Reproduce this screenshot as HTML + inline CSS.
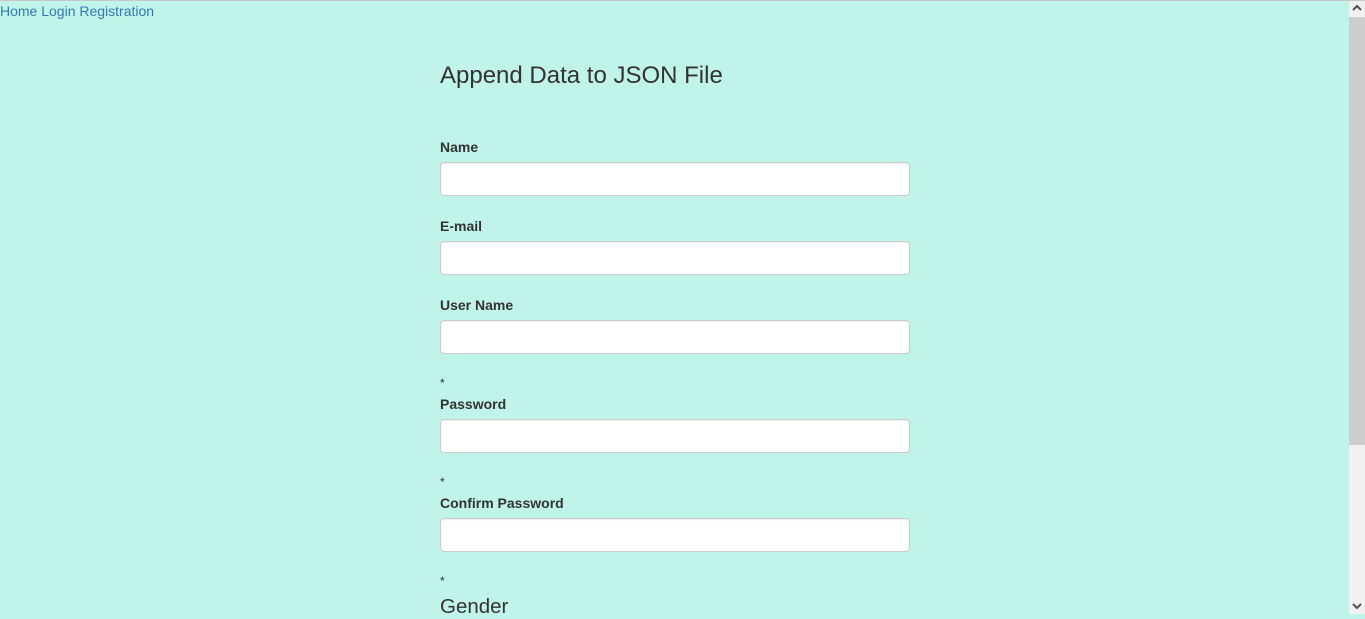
<!DOCTYPE html>
<html><head><meta charset="utf-8"><style>
html,body{margin:0;padding:0;}
body{width:1365px;height:614px;overflow:hidden;background:#c0f4e8;font-family:"Liberation Sans",Arial,sans-serif;color:#333;position:relative;}
.top{position:absolute;left:0;top:0;width:1365px;height:1px;background:#c8c8c8;}
.nav{position:absolute;left:0;top:1px;font-size:14px;line-height:20px;color:#337ab7;}
.t{position:absolute;left:440px;top:61px;font-size:24px;line-height:30px;color:#333;}
.l{position:absolute;left:440px;font-size:14px;font-weight:bold;line-height:20px;}
.s{position:absolute;left:440px;font-size:12px;line-height:14px;}
.i{position:absolute;left:440px;width:468px;height:32px;background:#fff;border:1px solid #ccc;border-radius:4px;box-shadow:inset 0 1px 1px rgba(0,0,0,.075);}
.g{position:absolute;left:440px;top:595px;font-size:20.5px;line-height:24px;}
.sb{position:absolute;left:1349px;top:1px;width:16px;height:613px;background:#f1f1f1;}
.th{position:absolute;left:1349px;top:17px;width:16px;height:428px;background:#cdcdcd;}
</style></head><body>
<div class="top"></div>
<div class="nav">Home Login Registration</div>
<div class="t">Append Data to JSON File</div>
<div class="l" style="top:137px">Name</div>
<div class="i" style="top:162px"></div>
<div class="l" style="top:216px">E-mail</div>
<div class="i" style="top:241px"></div>
<div class="l" style="top:295px">User Name</div>
<div class="i" style="top:320px"></div>
<div class="s" style="top:376px">*</div>
<div class="l" style="top:394px">Password</div>
<div class="i" style="top:419px"></div>
<div class="s" style="top:475px">*</div>
<div class="l" style="top:493px">Confirm Password</div>
<div class="i" style="top:518px"></div>
<div class="s" style="top:574px">*</div>
<div class="g">Gender</div>
<div class="sb"></div>
<div class="th"></div>
<svg style="position:absolute;left:1352px;top:4px" width="10" height="8"><path d="M1 6 L5 2 L9 6" stroke="#505050" stroke-width="2" fill="none"/></svg>
<svg style="position:absolute;left:1352px;top:602px" width="10" height="8"><path d="M1 2 L5 6 L9 2" stroke="#505050" stroke-width="2" fill="none"/></svg>
</body></html>
